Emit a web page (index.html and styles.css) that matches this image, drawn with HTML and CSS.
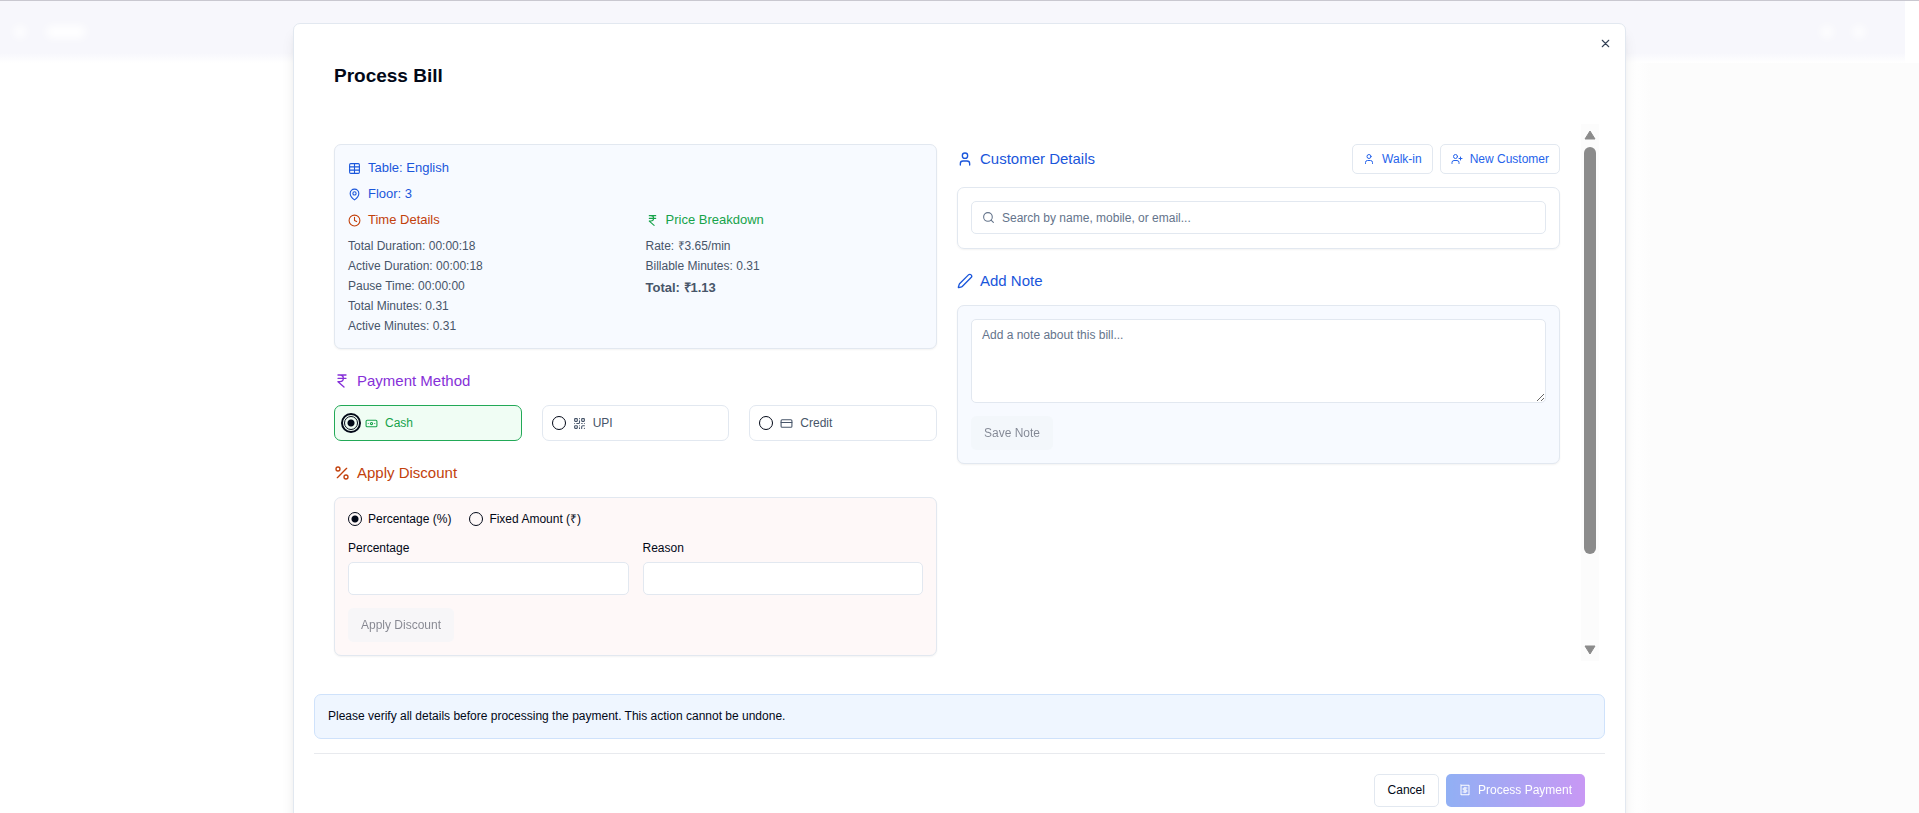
FILE: index.html
```html
<!DOCTYPE html>
<html lang="en">
<head>
    <meta charset="UTF-8">
    <meta name="viewport" content="width=device-width, initial-scale=1.0">
    <title>Process Bill</title>
    <link rel="stylesheet" href="styles.css">
</head>
<body>
    <!-- Page behind the dialog -->
    <div class="page" aria-hidden="true">
        <div class="page-bar">
            <span class="blob"></span>
            <span class="blob blob-wide"></span>
            <span class="blob blob-push"></span>
            <span class="blob"></span>
        </div>
        <div class="page-body"></div>
    </div>

    <div class="overlay">
        <div class="modal" role="dialog" aria-labelledby="modal-title">
            <button class="close" aria-label="Close">
                <svg class="icon" viewBox="0 0 24 24"><path d="M18 6 6 18M6 6l12 12"/></svg>
            </button>
            <header class="modal-header">
                <h1 id="modal-title">Process Bill</h1>
            </header>

            <div class="scroll-area">
                <main class="columns">
                    <div class="column">
                        <section class="card card-blue bill">
                            <h3 class="blue">
                                <svg class="icon" viewBox="0 0 24 24"><path d="M12 3v18M3 9h18M3 15h18"/><rect x="3" y="3" width="18" height="18" rx="2"/></svg>
                                Table: English
                            </h3>
                            <h3 class="blue">
                                <svg class="icon" viewBox="0 0 24 24"><path d="M20 10c0 6-8 12-8 12s-8-6-8-12a8 8 0 0 1 16 0Z"/><circle cx="12" cy="10" r="3"/></svg>
                                Floor: 3
                            </h3>
                            <div class="bill-grid">
                                <div>
                                    <h3 class="orange">
                                        <svg class="icon" viewBox="0 0 24 24"><circle cx="12" cy="12" r="10"/><path d="M12 6v6l4 2"/></svg>
                                        Time Details
                                    </h3>
                                    <div class="facts">
                                        <p>Total Duration: 00:00:18</p>
                                        <p>Active Duration: 00:00:18</p>
                                        <p>Pause Time: 00:00:00</p>
                                        <p>Total Minutes: 0.31</p>
                                        <p>Active Minutes: 0.31</p>
                                    </div>
                                </div>
                                <div>
                                    <h3 class="green">
                                        <svg class="icon" viewBox="0 0 24 24"><path d="M6 3h12M6 8h12M6 13l9 8M6 13h3c6.667 0 6.667-10 0-10"/></svg>
                                        Price Breakdown
                                    </h3>
                                    <div class="facts">
                                        <p>Rate: ₹3.65/min</p>
                                        <p>Billable Minutes: 0.31</p>
                                        <p class="total">Total: ₹1.13</p>
                                    </div>
                                </div>
                            </div>
                        </section>

                        <section>
                            <h2 class="purple">
                                <svg class="icon" viewBox="0 0 24 24"><path d="M6 3h12M6 8h12M6 13l9 8M6 13h3c6.667 0 6.667-10 0-10"/></svg>
                                Payment Method
                            </h2>
                            <div class="methods">
                                <label class="method method-active">
                                    <input type="radio" name="method" class="radio" checked>
                                    <svg class="icon" viewBox="0 0 24 24"><rect x="2" y="6" width="20" height="12" rx="2"/><circle cx="12" cy="12" r="2"/><path d="M6 12h.01M18 12h.01"/></svg>
                                    Cash
                                </label>
                                <label class="method">
                                    <input type="radio" name="method" class="radio">
                                    <svg class="icon" viewBox="0 0 24 24"><rect x="3" y="3" width="5" height="5" rx="1"/><rect x="16" y="3" width="5" height="5" rx="1"/><rect x="3" y="16" width="5" height="5" rx="1"/><path d="M21 16h-3a2 2 0 0 0-2 2v3M21 21v.01M12 7v3a2 2 0 0 1-2 2H7M3 12h.01M12 3h.01M12 16v.01M16 12h1M21 12v.01M12 21v-1"/></svg>
                                    UPI
                                </label>
                                <label class="method">
                                    <input type="radio" name="method" class="radio">
                                    <svg class="icon" viewBox="0 0 24 24"><rect x="2" y="5" width="20" height="14" rx="2"/><path d="M2 10h20"/></svg>
                                    Credit
                                </label>
                            </div>
                        </section>

                        <section>
                            <h2 class="orange">
                                <svg class="icon" viewBox="0 0 24 24"><path d="M19 5 5 19"/><circle cx="6" cy="6" r="3"/><circle cx="18" cy="18" r="3"/></svg>
                                Apply Discount
                            </h2>
                            <div class="card card-red">
                                <div class="discount-types">
                                    <label><input type="radio" name="discount" class="radio" checked> Percentage (%)</label>
                                    <label><input type="radio" name="discount" class="radio"> Fixed Amount (₹)</label>
                                </div>
                                <div class="fields">
                                    <div class="field">
                                        <label for="percentage">Percentage</label>
                                        <input type="text" id="percentage" class="input">
                                    </div>
                                    <div class="field">
                                        <label for="reason">Reason</label>
                                        <input type="text" id="reason" class="input">
                                    </div>
                                </div>
                                <button class="btn btn-muted" disabled>Apply Discount</button>
                            </div>
                        </section>
                    </div>

                    <div class="column">
                        <section>
                            <div class="customer-head">
                                <h2 class="blue">
                                    <svg class="icon" viewBox="0 0 24 24"><path d="M19 21v-2a4 4 0 0 0-4-4H9a4 4 0 0 0-4 4v2"/><circle cx="12" cy="7" r="4"/></svg>
                                    Customer Details
                                </h2>
                                <div class="customer-actions">
                                    <button class="btn btn-small">
                                        <svg class="icon" viewBox="0 0 24 24"><path d="M19 21v-2a4 4 0 0 0-4-4H9a4 4 0 0 0-4 4v2"/><circle cx="12" cy="7" r="4"/></svg>
                                        Walk-in
                                    </button>
                                    <button class="btn btn-small">
                                        <svg class="icon" viewBox="0 0 24 24"><path d="M16 21v-2a4 4 0 0 0-4-4H6a4 4 0 0 0-4 4v2M19 8v6M22 11h-6"/><circle cx="9" cy="7" r="4"/></svg>
                                        New Customer
                                    </button>
                                </div>
                            </div>
                            <div class="card customer-card">
                                <label class="input search">
                                    <svg class="icon" viewBox="0 0 24 24"><circle cx="11" cy="11" r="8"/><path d="m21 21-4.3-4.3"/></svg>
                                    <input type="text" placeholder="Search by name, mobile, or email..." aria-label="Search customer">
                                </label>
                            </div>
                        </section>

                        <section>
                            <h2 class="blue">
                                <svg class="icon" viewBox="0 0 24 24"><path d="M21.174 6.812a1 1 0 0 0-3.986-3.987L3.842 16.174a2 2 0 0 0-.5.83l-1.321 4.352a.5.5 0 0 0 .623.622l4.353-1.32a2 2 0 0 0 .83-.497z"/></svg>
                                Add Note
                            </h2>
                            <div class="card card-blue">
                                <textarea class="input note" placeholder="Add a note about this bill..." aria-label="Note"></textarea>
                                <button class="btn btn-muted" disabled>Save Note</button>
                            </div>
                        </section>
                    </div>
                </main>
                <div class="scrollbar" aria-hidden="true">
                    <svg class="arrow" viewBox="0 0 12 10"><path d="M6 1 11 9H1Z"/></svg>
                    <div class="track"><div class="thumb"></div></div>
                    <svg class="arrow" viewBox="0 0 12 10"><path d="M6 9 1 1h10Z"/></svg>
                </div>
            </div>

            <div class="alert" role="alert">Please verify all details before processing the payment. This action cannot be undone.</div>

            <footer class="modal-footer">
                <button class="btn btn-cancel">Cancel</button>
                <button class="btn btn-primary" disabled>
                    <svg class="icon" viewBox="0 0 24 24"><path d="M4 2v20l2-1 2 1 2-1 2 1 2-1 2 1 2-1 2 1V2l-2 1-2-1-2 1-2-1-2 1-2-1-2 1Z"/><path d="M16 8h-6a2 2 0 1 0 0 4h4a2 2 0 1 1 0 4H8M12 17.500v-11"/></svg>
                    Process Payment
                </button>
            </footer>
        </div>
    </div>
</body>
</html>
```
FILE: styles.css
```css
* {
    box-sizing: border-box;
}

body {
    margin: 0;
    height: 100vh;
    overflow: hidden;
    font-family: "Liberation Sans", Arial, sans-serif;
    font-size: 12px;
    line-height: 20px;
    color: #020817;
    background-color: #fff;
}

h1, h2, h3, p {
    margin: 0;
    font-weight: normal;
}

button, input, textarea {
    font: inherit;
    color: inherit;
}

.icon {
    width: 13px;
    height: 13px;
    flex-shrink: 0;
    fill: none;
    stroke: currentColor;
    stroke-width: 2;
    stroke-linecap: round;
    stroke-linejoin: round;
}

.blue { color: #1a56db; }
.orange { color: #c2410c; }
.green { color: #16a34a; }
.purple { color: #8630d8; }

/* page behind */
.page {
    position: fixed;
    inset: 0;
    display: flex;
    flex-direction: column;
    border-top: 1px solid #c9c8d0;
}

.page-bar {
    display: flex;
    align-items: center;
    gap: 20px;
    height: 62px;
    margin-right: 14px;
    padding: 0 40px 0 14px;
    background: linear-gradient(#f7f7fc 52px, #fff);
}

.blob {
    width: 12px;
    height: 12px;
    border-radius: 6px;
    background-color: #fff;
    filter: blur(4px);
}

.blob-wide {
    width: 40px;
}

.blob-push {
    margin-left: auto;
}

.page-body {
    flex: 1;
    background: linear-gradient(to right, #fff 85%, #fcfcfc 86%);
}

/* dialog */
.overlay {
    position: fixed;
    inset: 0;
    padding: 23px;
    overflow: hidden;
}

.modal {
    position: relative;
    max-width: 1333px;
    margin: 0 auto;
    padding: 20px;
    background-color: #fff;
    border: 1px solid #e2e8f0;
    border-radius: 7px;
    box-shadow: 0 10px 15px -3px rgba(0, 0, 0, 0.1), 0 4px 6px -4px rgba(0, 0, 0, 0.1);
}

.close {
    position: absolute;
    top: 13px;
    right: 13px;
    display: flex;
    padding: 0;
    border: none;
    background: none;
    color: #334155;
    cursor: pointer;
}

.modal-header {
    padding: 20px;
    margin-bottom: 16px;
}

.modal-header h1 {
    font-size: 19px;
    line-height: 24px;
    font-weight: bold;
}

.scroll-area {
    display: flex;
    height: 66vh;
    margin-right: 6px;
    overflow: hidden;
}

.columns {
    flex: 1;
    display: grid;
    grid-template-columns: 1fr 1fr;
    gap: 20px;
    padding: 20px 21px 20px 20px;
}

.column {
    display: flex;
    flex-direction: column;
    gap: 20px;
}

.scrollbar {
    display: flex;
    flex-direction: column;
    align-items: center;
    gap: 7px;
    width: 18px;
    padding: 6px 0;
    background-color: #fcfcfc;
}

.arrow {
    width: 12px;
    height: 10px;
    fill: #8b8b8b;
    stroke: #8b8b8b;
    stroke-width: 1;
    stroke-linejoin: round;
}

.track {
    flex: 1;
    width: 12px;
}

.thumb {
    height: 83%;
    border-radius: 6px;
    background-color: #8b8b8b;
}

h2 {
    display: flex;
    align-items: center;
    gap: 7px;
    margin-bottom: 12px;
    font-size: 15px;
    line-height: 24px;
}

h2 .icon {
    width: 16px;
    height: 16px;
}

h3 {
    display: flex;
    align-items: center;
    gap: 7px;
    font-size: 13px;
    line-height: 20px;
}

.card {
    padding: 13px;
    border: 1px solid #e2e8f0;
    border-radius: 7px;
    box-shadow: 0 1px 2px rgba(0, 0, 0, 0.05);
}

.card-blue {
    background-color: #f7faff;
}

.card-red {
    background-color: #fef8f8;
}

.bill {
    display: flex;
    flex-direction: column;
    gap: 6px;
    padding-bottom: 12px;
}

.bill-grid {
    display: grid;
    grid-template-columns: 1fr 1fr;
    gap: 20px;
}

.facts {
    margin-top: 6px;
    color: #475569;
}

.total {
    font-size: 13px;
    font-weight: bold;
    line-height: 24px;
}

.methods {
    display: grid;
    grid-template-columns: repeat(3, 1fr);
    gap: 20px;
}

.method {
    display: flex;
    align-items: center;
    gap: 7px;
    height: 36px;
    padding: 0 9px;
    border: 1px solid #e2e8f0;
    border-radius: 7px;
    color: #475569;
}

.method-active {
    color: #16a34a;
    background-color: #f0fdf4;
    border-color: #22a957;
}

.radio {
    appearance: none;
    width: 14px;
    height: 14px;
    margin: 0;
    border: 1px solid #020817;
    border-radius: 50%;
}

.radio:checked {
    background: radial-gradient(#020817 3px, transparent 4px);
}

.method-active .radio {
    outline: 2px solid #020817;
    outline-offset: 1px;
}

.discount-types {
    display: flex;
    gap: 18px;
    line-height: 16px;
}

.discount-types label {
    display: flex;
    align-items: center;
    gap: 6px;
}

.fields {
    display: grid;
    grid-template-columns: 1fr 1fr;
    gap: 14px;
    margin: 14px 0 13px;
}

.field {
    display: flex;
    flex-direction: column;
    gap: 7px;
    line-height: 14px;
}

.input {
    display: block;
    width: 100%;
    height: 33px;
    padding: 6px 10px;
    border: 1px solid #e2e8f0;
    border-radius: 5px;
    background-color: #fff;
}

::placeholder {
    color: #64748b;
    opacity: 1;
}

.customer-card {
    padding-bottom: 14px;
}

.search {
    display: flex;
    align-items: center;
    gap: 7px;
    color: #64748b;
}

.search input {
    flex: 1;
    padding: 0;
    border: none;
    background: none;
}

.note {
    height: 84px;
    margin-bottom: 13px;
    line-height: 18px;
    resize: vertical;
}

.btn {
    display: flex;
    align-items: center;
    gap: 7px;
    height: 34px;
    padding: 0 13px;
    border: none;
    border-radius: 5px;
    cursor: pointer;
}

.btn .icon {
    width: 12px;
    height: 12px;
}

.btn-small {
    height: 30px;
    padding: 0 10px;
    border: 1px solid #e2e8f0;
    background-color: #fff;
    color: #2563eb;
}

.btn-muted {
    background-color: #f1f5f9;
    color: #0f172a;
    opacity: 0.5;
}

.btn-cancel {
    height: 33px;
    border: 1px solid #e2e8f0;
    background-color: #fff;
}

.btn-primary {
    height: 33px;
    background: linear-gradient(to right, #2563eb, #9333ea);
    color: #fff;
    opacity: 0.5;
}

.customer-head {
    display: flex;
    align-items: center;
    justify-content: space-between;
    margin-bottom: 13px;
}

.customer-head h2 {
    margin: 0;
}

.customer-actions {
    display: flex;
    gap: 7px;
}

.alert {
    margin-top: 33px;
    padding: 12px 13px;
    line-height: 19px;
    background-color: #eff6ff;
    border: 1px solid #cfe2fb;
    border-radius: 7px;
}

.modal-footer {
    display: flex;
    justify-content: flex-end;
    gap: 7px;
    margin-top: 14px;
    padding: 20px;
    border-top: 1px solid #e8eaee;
}
```
